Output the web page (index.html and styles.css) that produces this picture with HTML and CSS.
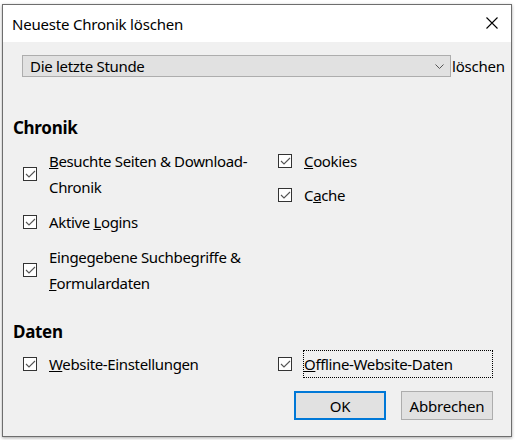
FILE: index.html
```html
<!DOCTYPE html>
<html lang="de">
<head>
<meta charset="utf-8">
<title>Neueste Chronik löschen</title>
<link rel="stylesheet" href="styles.css">
</head>
<body>
<div class="window">
  <div class="titlebar">
    <span class="title">Neueste Chronik löschen</span>
    <svg class="close" width="12" height="12" viewBox="0 0 12 12"><path d="M0.5 0.5L11.5 11.5M11.5 0.5L0.5 11.5" stroke="#000" stroke-width="1.1" fill="none"/></svg>
  </div>
  <div class="content">
    <div class="range-row">
      <div class="select">
        <span class="select-value">Die letzte Stunde</span>
        <svg class="chevron" width="9" height="5" viewBox="0 0 9 5"><path d="M0.5 0.5L4.5 4.5L8.5 0.5" stroke="#555" stroke-width="1" fill="none"/></svg>
      </div>
      <span class="range-label">löschen</span>
    </div>

    <h2 class="section">Chronik</h2>
    <div class="grid">
      <div class="col">
        <div class="item"><span class="box"><svg width="12" height="12" viewBox="0 0 12 12"><path d="M2 6L5 9L11 3" stroke="#555" stroke-width="1.1" fill="none"/></svg></span><span class="text"><u>B</u>esuchte Seiten &amp; Download-Chronik</span></div>
        <div class="item"><span class="box"><svg width="12" height="12" viewBox="0 0 12 12"><path d="M2 6L5 9L11 3" stroke="#555" stroke-width="1.1" fill="none"/></svg></span><span class="text">Aktive <u>L</u>ogins</span></div>
        <div class="item"><span class="box"><svg width="12" height="12" viewBox="0 0 12 12"><path d="M2 6L5 9L11 3" stroke="#555" stroke-width="1.1" fill="none"/></svg></span><span class="text">Eingegebene Suchbegriffe &amp; <u>F</u>ormulardaten</span></div>
      </div>
      <div class="col col-right">
        <div class="item"><span class="box"><svg width="12" height="12" viewBox="0 0 12 12"><path d="M2 6L5 9L11 3" stroke="#555" stroke-width="1.1" fill="none"/></svg></span><span class="text"><u>C</u>ookies</span></div>
        <div class="item"><span class="box"><svg width="12" height="12" viewBox="0 0 12 12"><path d="M2 6L5 9L11 3" stroke="#555" stroke-width="1.1" fill="none"/></svg></span><span class="text">C<u>a</u>che</span></div>
      </div>
    </div>

    <h2 class="section section-data">Daten</h2>
    <div class="grid grid-data">
      <div class="item"><span class="box"><svg width="12" height="12" viewBox="0 0 12 12"><path d="M2 6L5 9L11 3" stroke="#555" stroke-width="1.1" fill="none"/></svg></span><span class="text"><u>W</u>ebsite-Einstellungen</span></div>
      <div class="item"><span class="box"><svg width="12" height="12" viewBox="0 0 12 12"><path d="M2 6L5 9L11 3" stroke="#555" stroke-width="1.1" fill="none"/></svg></span><span class="text focus"><u>O</u>ffline-Website-Daten</span></div>
    </div>

    <div class="buttons">
      <button class="btn btn-default">OK</button>
      <button class="btn">Abbrechen</button>
    </div>
  </div>
</div>
</body>
</html>
```

FILE: styles.css
```css
html, body {
  margin: 0;
  padding: 0;
}
body {
  background: #ffffff;
  width: 515px;
  height: 440px;
  overflow: hidden;
  font-family: "Noto Sans", "Open Sans", sans-serif;
  font-size: 15px;
  color: #000;
}
.window {
  box-sizing: border-box;
  margin: 4px 0 0 2px;
  width: 510px;
  height: 433px;
  border: 1px solid #6e6e6e;
  background: #f0f0f0;
  box-shadow: 0 1px 3px rgba(0,0,0,0.35);
  display: flex;
  flex-direction: column;
}
.titlebar {
  height: 37px;
  background: #fff;
  display: flex;
  align-items: center;
  justify-content: space-between;
  padding: 0 13px 0 9px;
  flex: none;
}
.title {
  font-size: 15px;
  letter-spacing: -0.2px;
}
.close {
  display: block;
  margin-top: -1px;
}
.content {
  padding: 13px 18px 0 10px;
  flex: 1;
}
.range-row {
  display: flex;
  align-items: center;
  margin-left: 9px;
}
.select {
  box-sizing: border-box;
  flex: none;
  width: 429px;
  height: 22px;
  border: 1px solid #adadad;
  background: #e1e1e1;
  display: flex;
  align-items: center;
  justify-content: space-between;
  padding: 0 6px 0 7px;
}
.select-value {
  line-height: 20px;
  letter-spacing: -0.3px;
}
.chevron {
  display: block;
}
.range-label {
  flex: none;
  margin-left: 1px;
  letter-spacing: -0.2px;
}
.section {
  margin: 40px 0 8px;
  font-size: 17px;
  line-height: 22px;
  font-weight: bold;
  letter-spacing: -0.3px;
}
.section-data {
  margin-top: 24px;
  margin-bottom: 7px;
}
.grid {
  display: grid;
  grid-template-columns: 255px 1fr;
  margin-left: 10px;
}
.col {
  display: flex;
  flex-direction: column;
  gap: 7px;
}
.col-right {
  gap: 6px;
}
.item {
  display: flex;
  align-items: center;
  gap: 11px;
}
.box {
  box-sizing: border-box;
  width: 14px;
  height: 14px;
  border: 1px solid #333;
  background: #fff;
  flex: none;
  display: flex;
  align-items: center;
  justify-content: center;
}
.box svg {
  display: block;
}
.text {
  border: 1px dotted transparent;
  padding: 0 1px 0 0;
  line-height: 26px;
  width: 212px;
  letter-spacing: -0.35px;
}
.col-right .text,
.grid-data .text {
  width: auto;
}
.focus {
  flex: 1;
  border-color: #000;
}
.buttons {
  display: flex;
  justify-content: flex-end;
  gap: 15px;
  margin-top: 13px;
}
.btn {
  box-sizing: border-box;
  width: 92px;
  height: 29px;
  border: 1px solid #adadad;
  background: #e1e1e1;
  font-family: inherit;
  font-size: 15px;
  color: #000;
  padding: 0;
  letter-spacing: -0.2px;
}
.btn-default {
  border: 2px solid #0078d7;
}
```
